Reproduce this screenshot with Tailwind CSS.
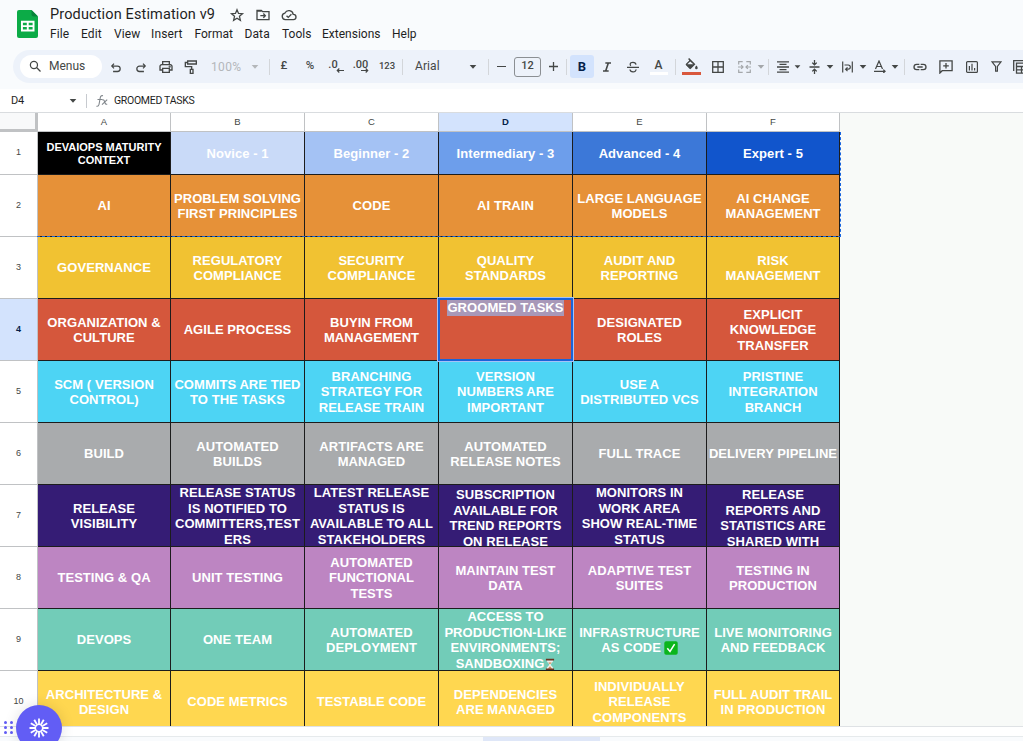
<!DOCTYPE html>
<html lang="en">
<head>
<meta charset="utf-8">
<title>Production Estimation v9</title>
<script src="https://cdn.jsdelivr.net/npm/@tailwindcss/browser@4"></script>
</head>
<body class="relative flex h-[741px] w-[1023px] flex-col overflow-hidden bg-[#f9fbfd] font-[Roboto,sans-serif] text-[#1f1f1f]">

<svg class="hidden">
  <symbol id="caret" viewBox="0 0 8 4"><path d="M0.7 0h6.6L4 3.7z" fill="currentColor"/></symbol>
</svg>

<header class="flex h-[50px] shrink-0">
  <svg class="ml-[17px] mt-[10px] h-[28px] w-[21px] shrink-0" viewBox="0 0 21 28">
    <path d="M2 0h12.500l6.500 6.500V26a2 2 0 0 1-2 2H2a2 2 0 0 1-2-2V2a2 2 0 0 1 2-2z" fill="#0cab47"/>
    <path d="M14.500 0v4.500a2 2 0 0 0 2 2H21z" fill="#07843a"/>
    <path d="M4 10.800h13.500v10.700H4zM5.900 12.700v2.600H9.800v-2.600zM11.700 12.700v2.600h3.900v-2.600zM5.900 17.100v2.500H9.800v-2.500zM11.700 17.100v2.500h3.900v-2.500z" fill="#fff" fill-rule="evenodd"/>
  </svg>
  <div class="ml-[12px] flex flex-col">
    <div class="flex h-[26px] items-center pt-[2px]">
      <h1 class="w-[179px] whitespace-nowrap pt-[2px] text-[14.5px] leading-none tracking-[0.13px]">Production Estimation v9</h1>
      <div class="flex items-center gap-[10px] pt-[2px] text-[#444746]">
        <svg class="h-4 w-4" viewBox="0 0 24 24" fill="none" stroke="currentColor" stroke-width="1.900"><path d="M12 4l2.300 5.600 6 .5-4.600 3.900 1.400 5.900L12 16.700l-5.100 3.200L8.300 14 3.700 10.100l6-.5z"/></svg>
        <svg class="h-4 w-4" viewBox="0 0 24 24" fill="none" stroke="currentColor" stroke-width="2"><path d="M3 5h6.500l2 2H21v12H3z"/><path d="M3 6h7M8 13h7M12.500 9.800l3 3.200-3 3.200"/></svg>
        <svg class="h-4 w-4" viewBox="0 0 24 24" fill="none" stroke="currentColor" stroke-width="2"><path d="M6.500 19a5 5 0 0 1-.6-9.900A6.600 6.600 0 0 1 18.300 11 4 4 0 0 1 18.700 19z"/><path d="M8.300 13l2.600 2.600 4.700-4.700"/></svg>
      </div>
    </div>
    <nav class="mt-[1px] flex text-[12px] leading-[15px] tracking-[0.1px]">
      <span class="w-[31px]">File</span><span class="w-[33px]">Edit</span><span class="w-[37px]">View</span><span class="w-[43.5px] tracking-[0.15px]">Insert</span><span class="w-[50px] tracking-[0px]">Format</span><span class="w-[37.500px]">Data</span><span class="w-[40px] tracking-[0px]">Tools</span><span class="w-[70px] tracking-[0px]">Extensions</span><span class="tracking-[0px]">Help</span>
    </nav>
  </div>
</header>

<div class="ml-[13px] flex h-[33px] shrink-0 items-center overflow-hidden rounded-l-full bg-[#edf2fa] text-[12px] text-[#444746] [&_svg]:block [&_svg]:shrink-0 [&>*]:shrink-0">
  <div class="ml-[7px] flex h-[23px] w-[82px] items-center rounded-full bg-white">
    <svg class="ml-[8px] h-[15px] w-[15px]" viewBox="0 0 24 24" fill="none" stroke="currentColor" stroke-width="2"><circle cx="9.500" cy="9.500" r="5.700"/><path d="M13.700 13.700L20 20"/></svg>
    <span class="ml-[6px] -mt-px tracking-[0px]">Menus</span>
  </div>
  <div class="ml-[1.500px] flex w-[25px] justify-center pt-[2px]"><svg class="h-[14px] w-[14px]" viewBox="0 0 24 24" fill="none" stroke="currentColor" stroke-width="2.200"><path d="M8.500 4.500L4.800 8.700l3.700 4M5 8.700h9.500a4.600 4.600 0 0 1 0 9.300H7"/></svg></div>
  <div class="flex w-[25px] justify-center pt-[2px]"><svg class="h-[14px] w-[14px]" viewBox="0 0 24 24" fill="none" stroke="currentColor" stroke-width="2.200"><path d="M15.500 4.500l3.700 4.200-3.700 4M19 8.700H9.500a4.600 4.600 0 0 0 0 9.300H17"/></svg></div>
  <div class="flex w-[25px] justify-center pt-[1px]"><svg class="h-[16px] w-[16px]" viewBox="0 0 24 24" fill="none" stroke="currentColor" stroke-width="2"><path d="M7 8V4h10v4M6 16.500H3V11a2.500 2.500 0 0 1 2.500-2.500h13A2.500 2.500 0 0 1 21 11v5.500h-3M7 14h10v6H7z"/><circle cx="17.500" cy="11.500" r=".6"/></svg></div>
  <div class="flex w-[25px] justify-center pt-[1px]"><svg class="h-[16px] w-[16px]" viewBox="0 0 24 24" fill="none" stroke="currentColor" stroke-width="2"><path d="M7 3h13v4.500H7zM7 5.200H3.500V11.500h9.500v4M11 15.500h4v6h-4z"/></svg></div>
  <span class="w-[43.500px] pl-[7.500px] tracking-[0.35px] text-[#b4b7ba]">100%</span>
  <div class="flex w-[16px] justify-center text-[#b4b7ba]"><svg class="h-1 w-2"><use href="#caret"/></svg></div>
  <i class="ml-[6px] h-4 w-px bg-[#d3d6da]"></i>
  <span class="ml-px -mt-px w-[26px] text-center text-[11.500px] font-medium">£</span>
  <span class="-mt-px w-[26px] text-center text-[11.500px] font-medium">%</span>
  <div class="flex w-[26px] flex-col items-center text-[11px] font-medium leading-[9px]"><span class="-ml-[6px]">.0</span><svg class="ml-[8px] -mt-px h-[5px] w-[8px]" viewBox="0 0 8 5" fill="none" stroke="currentColor" stroke-width="1.200"><path d="M8 2.500H1.500M3.300 .5l-2 2 2 2"/></svg></div>
  <div class="flex w-[26px] flex-col items-center text-[11px] font-medium leading-[9px]"><span class="-ml-[3px]">.00</span><svg class="ml-[6px] -mt-px h-[5px] w-[8px]" viewBox="0 0 8 5" fill="none" stroke="currentColor" stroke-width="1.200"><path d="M0 2.500h6.500M4.700 .5l2 2-2 2"/></svg></div>
  <span class="-mt-px w-[24px] text-center text-[9.500px] font-medium">123</span>
  <i class="ml-[3px] h-4 w-px bg-[#d3d6da]"></i>
  <span class="-mt-px w-[62px] pl-[12px] tracking-[0.1px]">Arial</span>
  <div class="flex w-[16px] justify-center"><svg class="h-1 w-2"><use href="#caret"/></svg></div>
  <i class="ml-[7px] h-4 w-px bg-[#d3d6da]"></i>
  <div class="flex w-[24px] justify-center"><i class="h-[1.500px] w-[9px] bg-[#444746]"></i></div>
  <div class="ml-px flex h-[20px] w-[27px] items-center justify-center rounded-[3px] border border-[#8b8f93] text-[11px] font-medium">12</div>
  <div class="flex w-[24px] justify-center"><svg class="h-[9px] w-[9px]" viewBox="0 0 9 9" stroke="currentColor" stroke-width="1.300"><path d="M4.500 0v9M0 4.500h9"/></svg></div>
  <i class="ml-px h-4 w-px bg-[#d3d6da]"></i>
  <div class="ml-[3px] flex h-[23px] w-[24px] items-center justify-center rounded-[3px] bg-[#d3e3fd] text-[13px] font-bold text-[#041e49]">B</div>
  <div class="flex w-[26px] justify-center pt-[1px]"><svg class="h-[16px] w-[16px]" viewBox="0 0 24 24" fill="none" stroke="currentColor" stroke-width="2.400"><path d="M9.500 6H18M6 18h8.500M14 6l-4 12"/></svg></div>
  <div class="flex w-[26px] justify-center pt-[1px]"><svg class="h-[16px] w-[16px]" viewBox="0 0 24 24" fill="none" stroke="currentColor" stroke-width="1.900"><path d="M3 12.500h18M16.500 8.500C16 3.500 7.500 4 7.800 8.200c.1 1 .5 1.600 1 2M7.500 15.800c.6 5 9.300 4.600 9-.2"/></svg></div>
  <div class="flex w-[25px] flex-col items-center"><span class="text-[12px] font-medium leading-[13px]">A</span><i class="h-[3px] w-[18px] bg-white"></i></div>
  <i class="ml-[4px] h-4 w-px bg-[#d3d6da]"></i>
  <div class="ml-[2px] flex w-[26px] flex-col items-center"><svg class="h-[14px] w-[14px]" viewBox="0 0 14 14" fill="currentColor"><path d="M4.100 1l1-.9 6.300 6.200-4.500 4.500a1 1 0 0 1-1.400 0L2 7.200a1 1 0 0 1 0-1.400l3.300-3.400zM6.200 3.400L3.300 6.300h6z" fill-rule="evenodd"/><path d="M12.400 7.600s1.300 1.500 1.300 2.300a1.300 1.300 0 0 1-2.600 0c0-.8 1.300-2.300 1.300-2.300z"/></svg><i class="h-[3px] w-[19px] bg-[#d9583d]"></i></div>
  <div class="flex w-[27px] justify-center"><svg class="h-[12px] w-[12px]" viewBox="0 0 12 12" fill="none" stroke="currentColor" stroke-width="1.300"><path d="M.7.7h10.600v10.600H.7zM6 .7v10.600M.7 6h10.600"/></svg></div>
  <div class="flex w-[26px] justify-center text-[#a4a7aa]"><svg class="h-[12px] w-[13px]" viewBox="0 0 13 12" fill="none" stroke="currentColor" stroke-width="1.200"><path d="M.7 3.500V.7h4M8.300.7h4v2.800M.7 8.500v2.800h4M8.300 11.300h4V8.500M0 6h5M3.200 4.200L5 6 3.200 7.800M13 6H8M9.800 4.200L8 6l1.800 1.800"/></svg></div>
  <svg class="h-1 w-2 text-[#a4a7aa]"><use href="#caret"/></svg>
  <i class="ml-[3px] h-4 w-px bg-[#d3d6da]"></i>
  <div class="ml-[2px] flex w-[23px] justify-center"><svg class="h-[12px] w-[12px]" viewBox="0 0 12 12" stroke="currentColor" stroke-width="1.300"><path d="M0 .8h12M2.500 3.400h7M0 6h12M2.500 8.600h7M0 11.200h12"/></svg></div>
  <svg class="h-1 w-[7px]"><use href="#caret"/></svg>
  <div class="ml-[2px] flex w-[23px] justify-center"><svg class="h-[14px] w-[11px]" viewBox="0 0 11 14" fill="none" stroke="currentColor" stroke-width="1.300"><path d="M.5 7h10M5.500 0v4.500M3.200 2.600l2.300 2.200 2.300-2.200M5.500 14V9.500M3.200 11.400l2.300-2.200 2.300 2.200"/></svg></div>
  <svg class="h-1 w-2"><use href="#caret"/></svg>
  <div class="ml-[2px] flex w-[23px] justify-center"><svg class="h-[12px] w-[11px]" viewBox="0 0 11 12" fill="none" stroke="currentColor" stroke-width="1.200"><path d="M.7 0.500v11M10.300 .5v11M2.500 4h3.700a2 2 0 0 1 0 4.200H4M5.500 6.300L3.600 8.200l1.900 1.900"/></svg></div>
  <svg class="h-1 w-2"><use href="#caret"/></svg>
  <div class="ml-[2px] flex w-[22px] justify-center"><svg class="h-[13px] w-[12px]" viewBox="0 0 12 13" fill="none" stroke="currentColor" stroke-width="1.200"><path d="M1.500 9L5 1l3.500 8M2.700 6.500h4.600M0 11.300h11M9.300 9.600l1.800 1.700-1.800 1.700"/></svg></div>
  <svg class="h-1 w-2"><use href="#caret"/></svg>
  <i class="ml-[5px] h-4 w-px bg-[#d3d6da]"></i>
  <div class="ml-[2px] flex w-[26px] justify-center"><svg class="h-[16px] w-[16px]" viewBox="0 0 24 24" fill="none" stroke="currentColor" stroke-width="2"><path d="M11 8H7a4 4 0 0 0 0 8h4M13 8h4a4 4 0 0 1 0 8h-4M8 12h8"/></svg></div>
  <div class="flex w-[26px] justify-center"><svg class="h-[14px] w-[14px]" viewBox="0 0 14 14" fill="none" stroke="currentColor" stroke-width="1.300"><path d="M.9 13V.9h12.200v9.800H3.200zM7 3v5.600M4.200 5.800h5.600"/></svg></div>
  <div class="flex w-[25px] justify-center"><svg class="h-[12px] w-[12px]" viewBox="0 0 12 12" fill="none" stroke="currentColor" stroke-width="1.200"><rect x=".6" y=".6" width="10.800" height="10.800" rx="1"/><path d="M3.400 5v4.500M6 2.800v6.700M8.600 7v2.500"/></svg></div>
  <div class="flex w-[25px] justify-center"><svg class="h-[11px] w-[11px]" viewBox="0 0 11 11" fill="none" stroke="currentColor" stroke-width="1.200"><path d="M1 .8h9L6.400 5.500v4.700H4.600V5.500z"/></svg></div>
  <svg class="ml-[4px] h-[14px] w-[14px]" viewBox="0 0 14 14" fill="none" stroke="currentColor" stroke-width="1.300"><path d="M.7 11V.7H12M3.500 3.200h10v10h-10zM3.500 6.500h10M3.500 9.800h10M8.500 6.500v6.700"/></svg>
</div>

<div class="mt-[6px] flex h-[23px] shrink-0 items-center bg-white text-[11px]">
  <span class="ml-[11px] w-[58px] pt-px text-[11px] tracking-[-0.2px]">D4</span>
  <svg class="h-1 w-2 text-[#444746]"><use href="#caret"/></svg>
  <i class="ml-[9px] h-[14px] w-px bg-[#c7cacf]"></i>
  <svg class="ml-[9px] h-[12px] w-[12px]" viewBox="0 0 12 12" fill="none" stroke="#80868b" stroke-width="1.100"><path d="M7 .8C5 .2 4.500 1.500 4.200 3L3 9.500C2.700 11 2 11.500.4 11.200M1.500 4.500h4.700M6.200 5c1.500-.8 2 .5 2.500 2s1 2.700 2.500 2M11.200 4.700L6 9.600"/></svg>
  <span class="ml-[6px] pt-px text-[10.500px] tracking-[-0.3px]">GROOMED TASKS</span>
</div>

<main class="relative h-[614px] shrink-0 overflow-hidden border-t border-[#d9dcdf] bg-[#f8faf8] font-['Liberation_Sans',Arial,sans-serif]">
  <div id="sheet" class="grid w-[840px] grid-cols-[38px_133px_134px_134px_134px_134px_133px] grid-rows-[19px_43px_repeat(9,62px)]"></div>
  <div class="pointer-events-none absolute left-[37px] top-[19px] h-[105px] w-[804px] border-b border-r border-dashed border-[#1a66e0]"></div>
  <div class="pointer-events-none absolute left-[437px] top-[184px] h-[65px] w-[137px] border border-[#a5c3f7]"></div>
  <div class="pointer-events-none absolute left-[438px] top-[185px] h-[63px] w-[135px] border-2 border-[#1a63d8]"></div>
</main>

<footer class="flex h-[15px] shrink-0 flex-col border-t border-[#dfe2e5] bg-white">
  <div class="mt-[9px] h-[5px] border-t border-[#e6eaec] bg-[#f9fbfd]"><div class="ml-[483px] h-[5px] w-[117px] bg-[#dfe7f8]"></div></div>
</footer>

<div class="absolute left-0 top-[704px] flex h-[48px] items-start">
  <div class="ml-[4px] mt-[17px] grid grid-cols-2 gap-x-[3px] gap-y-[2px] [&>i]:h-[3px] [&>i]:w-[3px] [&>i]:rounded-full [&>i]:bg-[#625df5]"><i></i><i></i><i></i><i></i><i></i><i></i></div>
  <div class="ml-[3px] mt-px flex h-[46px] w-[46px] items-center justify-center rounded-full bg-[#625df5] shadow-[0_0_14px_rgba(0,0,0,0.12)]">
    <svg class="h-[20px] w-[20px]" viewBox="-10 -10 20 20" fill="none" stroke="#fff" stroke-width="1.800"><circle r="3.600" stroke-width="1.300"/><path d="M0-4v-5.500M0 4v5.500M4 0h5.500M-4 0h-5.500M2-3.460l2.750-4.770M3.460-2l4.770-2.750M3.460 2l4.770 2.750M2 3.460l2.750 4.770M-2 3.460l-2.750 4.770M-3.460 2l-4.770 2.750M-3.460-2l-4.770-2.750M-2-3.460l-2.750-4.770"/></svg>
  </div>
</div>

<script>
const check = '<svg class="-ml-px inline-block h-[14px] w-[14px] align-[-3px]" viewBox="0 0 14 14"><rect x=".3" y=".3" width="13.400" height="13.400" rx="1.800" fill="#0bb51c"/><path d="M3.300 7.300l2.700 3.200 4.600-7.300" fill="none" stroke="#fff" stroke-width="1.500"/></svg>';
const glass = '<svg class="ml-px inline-block h-[13px] w-[10px] align-[-3px]" viewBox="0 0 11 13"><path d="M2 1.500h7c0 3-2.600 3.500-2.600 5S9 8.500 9 11.500H2c0-3 2.600-3.500 2.600-5S2 4.500 2 1.500z" fill="#e9efee"/><path d="M3.600 4.200h3.800L5.500 6.200zM5.500 8.300l2.400 2.800H3.100z" fill="#d08a4a"/><path d="M1 .3h9v1.700H1zM1 11h9v1.700H1z" fill="#6b3322"/></svg>';
const rows = [
  ['', ['DEVAIOPS MATURITY|CONTEXT','Novice - 1','Beginner - 2','Intermediary - 3','Advanced - 4','Expert - 5']],
  ['bg-[#e69138]', ['AI','PROBLEM SOLVING|FIRST PRINCIPLES','CODE','AI TRAIN','LARGE LANGUAGE|MODELS','AI CHANGE|MANAGEMENT']],
  ['bg-[#f1c232]', ['GOVERNANCE','REGULATORY|COMPLIANCE','SECURITY|COMPLIANCE','QUALITY|STANDARDS','AUDIT AND|REPORTING','RISK|MANAGEMENT']],
  ['bg-[#d5573c]', ['ORGANIZATION &amp;|CULTURE','AGILE PROCESS','BUYIN FROM|MANAGEMENT','GROOMED TASKS','DESIGNATED|ROLES','EXPLICIT|KNOWLEDGE|TRANSFER']],
  ['bg-[#4dd4f4]', ['SCM ( VERSION|CONTROL)','COMMITS ARE TIED|TO THE TASKS','BRANCHING|STRATEGY FOR|RELEASE TRAIN','VERSION|NUMBERS ARE|IMPORTANT','USE A|DISTRIBUTED VCS','PRISTINE|INTEGRATION|BRANCH']],
  ['bg-[#a9abad]', ['BUILD','AUTOMATED|BUILDS','ARTIFACTS ARE|MANAGED','AUTOMATED|RELEASE NOTES','FULL TRACE','DELIVERY PIPELINE']],
  ['bg-[#351c75]', ['RELEASE|VISIBILITY','RELEASE STATUS|IS NOTIFIED TO|COMMITTERS,TEST|ERS','LATEST RELEASE|STATUS IS|AVAILABLE TO ALL|STAKEHOLDERS','SUBSCRIPTION|AVAILABLE FOR|TREND REPORTS|ON RELEASE','MONITORS IN|WORK AREA|SHOW REAL-TIME|STATUS','RELEASE|REPORTS AND|STATISTICS ARE|SHARED WITH']],
  ['bg-[#bd85c2]', ['TESTING &amp; QA','UNIT TESTING','AUTOMATED|FUNCTIONAL|TESTS','MAINTAIN TEST|DATA','ADAPTIVE TEST|SUITES','TESTING IN|PRODUCTION']],
  ['bg-[#72ccb8]', ['DEVOPS','ONE TEAM','AUTOMATED|DEPLOYMENT','ACCESS TO|PRODUCTION-LIKE|ENVIRONMENTS;|SANDBOXING'+glass,'INFRASTRUCTURE|AS CODE '+check,'LIVE MONITORING|AND FEEDBACK']],
  ['bg-[#ffd750]', ['ARCHITECTURE &amp;|DESIGN','CODE METRICS','TESTABLE CODE','DEPENDENCIES|ARE MANAGED','INDIVIDUALLY|RELEASE|COMPONENTS','FULL AUDIT TRAIL|IN PRODUCTION']]
];
const levels = ['bg-black','bg-[#c9daf8]','bg-[#a4c2f4]','bg-[#6d9eeb]','bg-[#3c78d8]','bg-[#1155cc]'];
let html = '<div class="border-b-[3px] border-r-[3px] border-[#c0c2c4] bg-[#f8f9fa]"></div>';
'ABCDEF'.split('').forEach(c => {
  html += '<div class="flex items-center justify-center border-b border-r border-[#c0c2c4] text-[9.500px] ' + (c === 'D' ? 'bg-[#d3e3fd] font-bold text-[#041e49]' : 'bg-white text-[#444746]') + '">' + c + '</div>';
});
rows.forEach(([bg, cells], r) => {
  html += '<div class="flex items-center justify-center border-b border-r border-[#c0c2c4] text-[9px] ' + (r === 3 ? 'bg-[#d3e3fd] font-bold text-[#041e49]' : 'bg-white text-[#444746]') + '">' + (r + 1) + '</div>';
  cells.forEach((text, c) => {
    const size = r === 0 && c === 0 ? 'text-[11px] leading-[13px]' : 'text-[13px] leading-[15.500px] tracking-[0.06px]';
    const active = r === 3 && c === 3;
    const clipped = r === 6 && (c === 3 || c === 5);
    const align = active ? 'items-start pt-[1px]' : clipped ? 'items-start pt-[2px]' : 'items-center pt-px';
    html += '<div class="flex justify-center overflow-hidden whitespace-nowrap border-b border-r border-[#1c1c1c] text-center font-bold text-white ' + size + ' ' + align + ' ' + (r === 0 ? levels[c] : bg) + '"><span class="' + (active ? 'bg-[#a898b8]' : '') + '">' + text.split('|').join('<br>') + '</span></div>';
  });
});
document.getElementById('sheet').innerHTML = html;
</script>
</body>
</html>
